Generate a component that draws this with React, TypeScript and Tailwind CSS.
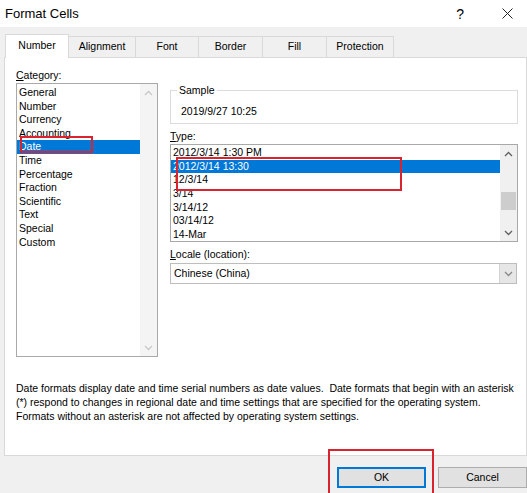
import React from "react";

const categories = [
  "General",
  "Number",
  "Currency",
  "Accounting",
  "Date",
  "Time",
  "Percentage",
  "Fraction",
  "Scientific",
  "Text",
  "Special",
  "Custom",
];

const types = [
  "2012/3/14 1:30 PM",
  "2012/3/14 13:30",
  "12/3/14",
  "3/14",
  "3/14/12",
  "03/14/12",
  "14-Mar",
];

const tabs = [
  { label: "Number", w: "w-[64px]" },
  { label: "Alignment", w: "w-[67px]" },
  { label: "Font", w: "w-[63px]" },
  { label: "Border", w: "w-[64px]" },
  { label: "Fill", w: "w-[64px]" },
  { label: "Protection", w: "w-[67px]" },
];

function ChevronUp({ color }: { color: string }) {
  return (
    <svg width="9" height="6" viewBox="0 0 9 6">
      <path d="M1 5 L4.5 1.5 L8 5" fill="none" stroke={color} strokeWidth="1.3" />
    </svg>
  );
}

function ChevronDown({ color }: { color: string }) {
  return (
    <svg width="9" height="6" viewBox="0 0 9 6">
      <path d="M1 1 L4.5 4.5 L8 1" fill="none" stroke={color} strokeWidth="1.3" />
    </svg>
  );
}

export default function App() {
  return (
    <div className="relative w-[527px] h-[493px] overflow-hidden bg-[#f0f0f0] text-[#000] font-['Segoe_UI','Liberation_Sans',sans-serif] text-[10.5px]">
      {/* Title bar */}
      <div className="h-[27px] bg-white flex items-center pl-[5px]">
        <span className="text-[13px] leading-[16px]">Format Cells</span>
        <span className="ml-auto text-[14px] leading-[16px] mr-[38px]">?</span>
        <svg width="11" height="11" viewBox="0 0 11 11" className="mr-[14px]">
          <path d="M0.5 0.5 L10.5 10.5 M10.5 0.5 L0.5 10.5" stroke="#222" strokeWidth="1" />
        </svg>
      </div>

      {/* Tabs */}
      <div className="flex items-end pl-[5px] pt-[7px] h-[30px]">
        {tabs.map((t, i) =>
          i === 0 ? (
            <div
              key={t.label}
              className={`${t.w} h-[24px] -mb-px relative z-10 bg-white border border-b-0 border-[#d9d9d9] flex items-center justify-center pb-[2px]`}
            >
              {t.label}
            </div>
          ) : (
            <div
              key={t.label}
              className={`${t.w} h-[21px] bg-[#f0f0f0] border-t border-r border-[#d9d9d9] flex items-center justify-center`}
            >
              {t.label}
            </div>
          )
        )}
      </div>

      {/* Panel */}
      <div className="ml-[4px] w-[523px] h-[399px] bg-white border border-[#d9d9d9] pl-[11px] pr-[7px] pt-[9px]">
        <div className="flex gap-[12px] items-start">
          {/* Category */}
          <div className="w-[142px] flex flex-col">
            <div className="h-[16px] leading-[16px]">
              <span className="underline">C</span>ategory:
            </div>
            <div className="h-[274px] border border-[#a9a9a9] flex">
              <div className="flex-1 pt-[2px]">
                {categories.map((c) => (
                  <div
                    key={c}
                    className={`h-[13.6px] leading-[13.6px] pl-[2px] ${
                      c === "Date" ? "bg-[#0078d7] text-white" : ""
                    }`}
                  >
                    {c}
                  </div>
                ))}
              </div>
              <div className="w-[17px] bg-[#f4f4f4] flex flex-col justify-between">
                <div className="h-[17px] flex items-center justify-center">
                  <ChevronUp color="#c8c8c8" />
                </div>
                <div className="h-[17px] flex items-center justify-center">
                  <ChevronDown color="#c8c8c8" />
                </div>
              </div>
            </div>
          </div>

          {/* Right column */}
          <div className="w-[348px] flex flex-col pt-[16px]">
            <fieldset className="border border-[#dcdcdc] h-[41px] pl-[10px]">
              <legend className="ml-[-4px] px-[2px] leading-[14px]">Sample</legend>
              <div className="leading-[14px] pt-[7px]">2019/9/27 10:25</div>
            </fieldset>

            <div className="mt-[5px] h-[14px] leading-[14px]">
              <span className="underline">T</span>ype:
            </div>
            <div className="mt-[1px] h-[98px] border border-[#a9a9a9] flex">
              <div className="flex-1 pt-[1px]">
                {types.map((t, i) => (
                  <div
                    key={t}
                    className={`h-[13.67px] leading-[13.67px] pl-[2px] ${
                      i === 1 ? "bg-[#0078d7] text-white" : ""
                    }`}
                  >
                    {t}
                  </div>
                ))}
              </div>
              <div className="w-[17px] bg-[#f0f0f0] flex flex-col">
                <div className="h-[17px] flex items-center justify-center">
                  <ChevronUp color="#606060" />
                </div>
                <div className="flex-1 px-[1px]">
                  <div className="mt-[30px] h-[18px] bg-[#cdcdcd]" />
                </div>
                <div className="h-[17px] flex items-center justify-center">
                  <ChevronDown color="#606060" />
                </div>
              </div>
            </div>

            <div className="mt-[5px] h-[14px] leading-[14px]">
              <span className="underline">L</span>ocale (location):
            </div>
            <div className="mt-[2px] h-[21px] w-[347px] border border-[#bdbdbd] flex items-stretch">
              <div className="flex-1 pl-[3px] flex items-center">Chinese (China)</div>
              <div className="w-[17px] bg-[#e6e6e6] border-l border-[#d4d4d4] flex items-center justify-center">
                <ChevronDown color="#8a8a8a" />
              </div>
            </div>
          </div>
        </div>

        <div className="mt-[24px] leading-[14px] whitespace-nowrap">
          <div>
            Date formats display date and time serial numbers as date values.&nbsp; Date formats that begin with an asterisk
          </div>
          <div>
            (*) respond to changes in regional date and time settings that are specified for the operating system.
          </div>
          <div>Formats without an asterisk are not affected by operating system settings.</div>
        </div>
      </div>

      {/* Buttons */}
      <div className="mt-[11px] flex justify-end gap-[12px]">
        <button className="w-[89px] h-[21px] bg-[#e1e1e1] border border-[#0078d7] shadow-[inset_0_0_0_1px_#0078d7]">
          OK
        </button>
        <button className="w-[89px] h-[21px] bg-[#e1e1e1] border border-[#adadad]">Cancel</button>
      </div>

      {/* Red annotation boxes */}
      <div className="absolute left-[18px] top-[34px] w-[38px] h-[20px] border-2 border-[#d9232e] pointer-events-none" />
      <div className="absolute left-[20px] top-[136px] w-[73px] h-[17px] border-2 border-[#d9232e] pointer-events-none" />
      <div className="absolute left-[176px] top-[157px] w-[226px] h-[34px] border-2 border-[#d9232e] pointer-events-none" />
      <div className="absolute left-[328px] top-[449px] w-[106px] h-[50px] border-2 border-[#d9232e] pointer-events-none" />
    </div>
  );
}
